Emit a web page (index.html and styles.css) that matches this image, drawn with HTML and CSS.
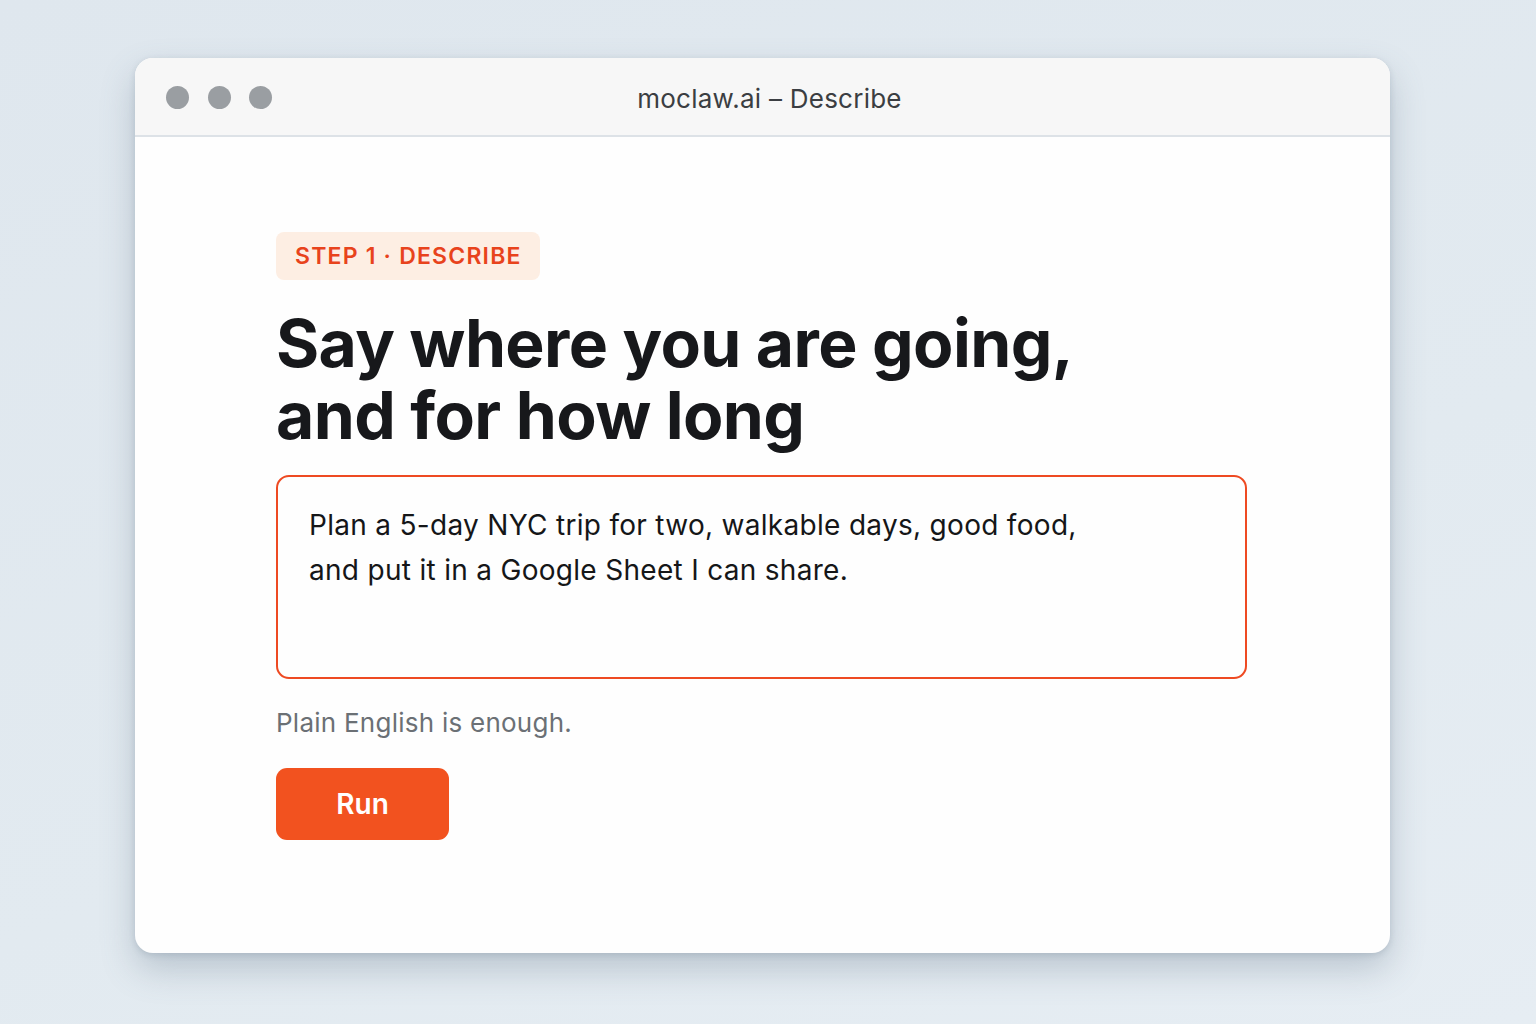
FILE: index.html
```html
<!DOCTYPE html>
<html lang="en">
<head>
<meta charset="utf-8">
<title>moclaw.ai – Describe</title>
<link rel="stylesheet" href="styles.css">
</head>
<body>
<div class="window">
  <div class="titlebar">
    <div class="dots"><span class="dot"></span><span class="dot"></span><span class="dot"></span></div>
    <div class="title">moclaw.ai – Describe</div>
  </div>
  <div class="content">
    <div class="badge">STEP 1 · DESCRIBE</div>
    <h1 class="heading">Say where you are going,<br>and for how long</h1>
    <div class="prompt">Plan a 5-day NYC trip for two, walkable days, good food,<br>and put it in a Google Sheet I can share.</div>
    <p class="hint">Plain English is enough.</p>
    <button class="run">Run</button>
  </div>
</div>
</body>
</html>
```
FILE: styles.css
```css
html, body {
  margin: 0;
  padding: 0;
}
body {
  width: 1536px;
  height: 1024px;
  overflow: hidden;
  background: linear-gradient(160deg, #dfe7ee 0%, #e2eaf0 60%, #e6edf3 100%);
  font-family: Inter, "Noto Sans", sans-serif;
  padding: 58px 0 0 135px;
  box-sizing: border-box;
}
.window {
  width: 1255px;
  height: 895px;
  background: #fefefe;
  border-radius: 18px;
  overflow: hidden;
  box-shadow: 0 16px 34px rgba(90, 110, 130, 0.3), 0 2px 6px rgba(90, 110, 130, 0.2);
  display: flex;
  flex-direction: column;
}
.titlebar {
  height: 77px;
  flex: none;
  background: #f7f7f7;
  border-bottom: 2px solid #dde2e7;
  display: flex;
  align-items: center;
  position: relative;
}
.dots {
  display: flex;
  gap: 18.5px;
  padding-left: 31px;
  margin-top: 1px;
}
.dot {
  width: 23px;
  height: 23px;
  border-radius: 50%;
  background: #9a9ea2;
}
.title {
  position: absolute;
  left: 0;
  right: 0;
  top: 4px;
  bottom: 0;
  display: flex;
  align-items: center;
  justify-content: center;
  font-size: 26px;
  letter-spacing: 0.25px;
  color: #3b3e42;
  padding-left: 14px;
  pointer-events: none;
}
.content {
  padding: 95px 0 0 141px;
  display: flex;
  flex-direction: column;
  align-items: flex-start;
}
.badge {
  height: 48px;
  display: flex;
  align-items: center;
  padding: 0 18px 0 19px;
  background: #fdeee3;
  color: #e8431c;
  font-size: 23px;
  font-weight: 600;
  letter-spacing: 1.2px;
  border-radius: 8px;
}
.heading {
  margin: 27px 0 0 0;
  font-size: 66px;
  line-height: 72px;
  font-weight: 700;
  color: #17181b;
  letter-spacing: -0.6px;
}
.prompt {
  margin-top: 24px;
  width: 971px;
  height: 204px;
  box-sizing: border-box;
  border: 2px solid #ee4a22;
  border-radius: 13px;
  padding: 26px 31px;
  font-size: 28px;
  line-height: 45px;
  letter-spacing: 0.3px;
  color: #151618;
}
.hint {
  margin: 26px 0 0 0;
  font-size: 26px;
  line-height: 36px;
  letter-spacing: 0.25px;
  color: #6b7075;
}
.run {
  margin-top: 27px;
  width: 173px;
  height: 72px;
  border: none;
  border-radius: 11px;
  background: #f2521f;
  color: #ffffff;
  font-family: Inter, "Noto Sans", sans-serif;
  font-size: 28px;
  font-weight: 600;
  cursor: pointer;
}
```
